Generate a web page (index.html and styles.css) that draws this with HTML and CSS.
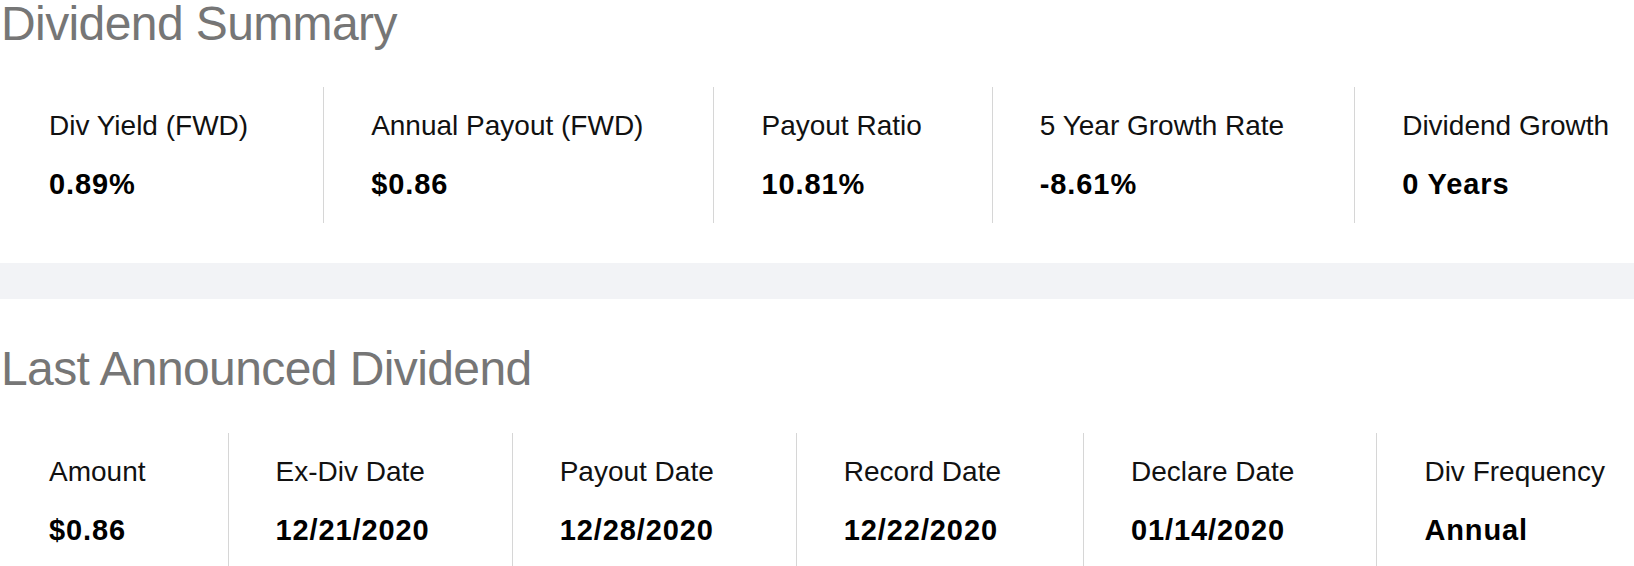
FILE: index.html
```html
<!DOCTYPE html>
<html lang="en">
<head>
<meta charset="utf-8">
<title>Dividends</title>
<link rel="stylesheet" href="styles.css">
</head>
<body>
<section class="section section--first">
  <h2 class="section-title">Dividend Summary</h2>
  <div class="stats stats--summary">
    <div class="stat"><div class="stat-label">Div Yield (FWD)</div><div class="stat-value">0.89%</div></div>
    <div class="stat"><div class="stat-label">Annual Payout (FWD)</div><div class="stat-value">$0.86</div></div>
    <div class="stat"><div class="stat-label">Payout Ratio</div><div class="stat-value">10.81%</div></div>
    <div class="stat"><div class="stat-label">5 Year Growth Rate</div><div class="stat-value">-8.61%</div></div>
    <div class="stat"><div class="stat-label">Dividend Growth</div><div class="stat-value">0 Years</div></div>
  </div>
</section>
<div class="band"></div>
<section class="section">
  <h2 class="section-title">Last Announced Dividend</h2>
  <div class="stats stats--last">
    <div class="stat"><div class="stat-label">Amount</div><div class="stat-value">$0.86</div></div>
    <div class="stat"><div class="stat-label">Ex-Div Date</div><div class="stat-value">12/21/2020</div></div>
    <div class="stat"><div class="stat-label">Payout Date</div><div class="stat-value">12/28/2020</div></div>
    <div class="stat"><div class="stat-label">Record Date</div><div class="stat-value">12/22/2020</div></div>
    <div class="stat"><div class="stat-label">Declare Date</div><div class="stat-value">01/14/2020</div></div>
    <div class="stat"><div class="stat-label">Div Frequency</div><div class="stat-value">Annual</div></div>
  </div>
</section>
</body>
</html>
```

FILE: styles.css
```css
html, body {
  margin: 0;
  padding: 0;
  background: #ffffff;
}

body {
  font-family: "Liberation Sans", Arial, sans-serif;
  color: #111;
  overflow: hidden;
}

.section {
  padding-top: 46px;
}

.section--first {
  padding-top: 0;
}

.section-title {
  margin: 0 0 40px 0;
  padding-left: 1px;
  font-size: 48px;
  line-height: 48px;
  font-weight: 400;
  letter-spacing: -0.6px;
  color: #767676;
}

.section--first .section-title {
  margin-bottom: 39px;
}

.stats {
  display: flex;
  flex-wrap: nowrap;
  white-space: nowrap;
}

.stat {
  flex: 0 0 auto;
  padding: 22px 70px 22px 47px;
  border-left: 1px solid #d6d6d6;
}

.stat:first-child {
  border-left: none;
  padding-left: 49px;
}

.stats--summary .stat:first-child {
  padding-right: 75px;
}

.stats--last .stat {
  padding-right: 82px;
}

.stat-label {
  font-size: 28px;
  line-height: 34px;
}

.stat-value {
  margin-top: 24px;
  font-size: 29px;
  line-height: 34px;
  font-weight: 700;
  letter-spacing: 0.9px;
  color: #000;
}

.band {
  margin-top: 40px;
  height: 36px;
  background: #f2f3f6;
}
```
